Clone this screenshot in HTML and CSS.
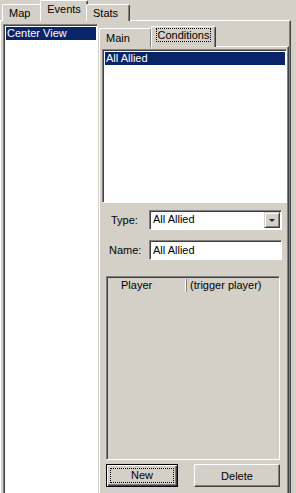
FILE: index.html
```html
<!DOCTYPE html>
<html lang="en">
<head>
  <meta charset="UTF-8">
  <title>Triggers</title>
  <link rel="stylesheet" href="styles.css">
</head>
<body>

  <div class="window">
    <div class="tabs">
      <div class="tab">Map</div>
      <div class="tab active">Events</div>
      <div class="tab">Stats</div>
    </div>

    <div class="panel">
      <div class="listbox events">
        <div class="item selected">Center View</div>
      </div>

      <div class="inner">
        <div class="tabs small">
          <div class="tab">Main</div>
          <div class="tab active"><span class="focus">Conditions</span></div>
        </div>

        <div class="inner-panel">
          <div class="listbox conditions">
            <div class="item selected">All Allied</div>
          </div>

          <div class="field type-row">
            <label>Type:</label>
            <div class="combo">
              <span class="value">All Allied</span>
              <span class="drop"><span class="arrow"></span></span>
            </div>
          </div>

          <div class="field name-row">
            <label>Name:</label>
            <div class="textbox">All Allied</div>
          </div>

          <div class="listview">
            <div class="lv-header">
              <div class="col player">Player</div>
              <div class="col value">(trigger player)</div>
            </div>
            <div class="lv-body"></div>
          </div>

          <div class="buttons">
            <button class="btn default"><span class="focus">New</span></button>
            <button class="btn">Delete</button>
          </div>
        </div>
      </div>
    </div>
  </div>

</body>
</html>
```

FILE: styles.css
```css
body {
  margin: 0;
  font-family: 'Liberation Sans', Arial, sans-serif;
  font-size: 11px;
  background: #d4d0c8;
  color: #000;
  overflow: hidden;
}

.window {
  width: 296px;
  height: 493px;
  overflow: hidden;
}

/* tab strips */
.tabs {
  display: flex;
  align-items: flex-end;
  height: 21px;
  padding-left: 2px;
  margin-bottom: -1px;
}

.tab {
  box-sizing: border-box;
  height: 17px;
  padding: 2px 6px 0;
  border-top: 1px solid #fff;
  border-left: 1px solid #fff;
  border-right: 1px solid #404040;
  box-shadow: inset -1px 0 #808080;
  border-radius: 2px 2px 0 0;
  background: #d4d0c8;
}

.tabs > .tab:first-child {
  width: 40px;
}

.tab.active {
  height: 21px;
  padding-top: 2px;
  margin: 0 -2px;
  width: 48px;
  text-align: center;
}

.tabs > .tab:last-child {
  width: 44px;
}

.panel {
  box-sizing: border-box;
  width: 291px;
  height: 473px;
  display: flex;
  align-items: flex-start;
  padding: 3px 1px 0 2px;
  border-top: 1px solid #fff;
  border-left: 1px solid #fff;
  border-right: 1px solid #404040;
  box-shadow: inset -1px 0 #808080;
}

/* list boxes */
.listbox {
  box-sizing: border-box;
  background: #fff;
  border: 1px solid;
  border-color: #808080 #fff #fff #808080;
  box-shadow: inset 1px 1px #404040;
  padding: 2px 1px 1px 2px;
}

.listbox.events {
  width: 95px;
  height: 480px;
}

.item {
  height: 13px;
  line-height: 13px;
  padding-left: 1px;
}

.item.selected {
  background: #0a246a;
  color: #fff;
}

/* inner tab control */
.inner {
  margin-left: 1px;
  width: 190px;
}

.tabs.small {
  height: 23px;
  padding-left: 0;
}

.tabs.small .tab {
  width: 53px;
  height: 19px;
  padding-top: 3px;
}

.tabs.small .tab.active {
  width: 65px;
  height: 21px;
  margin: 0 0 0 -1px;
  padding: 2px 2px 0;
}

.focus {
  display: inline-block;
  outline: 1px dotted #000;
  padding: 0 1px;
  line-height: 12px;
}

.inner-panel {
  box-sizing: border-box;
  height: 460px;
  padding: 2px 1px 0 2px;
  border-top: 1px solid #fff;
  border-left: 1px solid #fff;
  border-right: 1px solid #404040;
  box-shadow: inset -1px 0 #808080;
}

.listbox.conditions {
  width: 185px;
  height: 154px;
}

/* form rows */
.field {
  display: flex;
  align-items: center;
  height: 20px;
}

.type-row {
  margin-top: 7px;
}

.name-row {
  margin-top: 10px;
}

.field label {
  width: 38px;
  padding-left: 9px;
  color: #000;
}

.name-row label {
  padding-left: 7px;
  width: 40px;
}

.combo,
.textbox {
  box-sizing: border-box;
  width: 133px;
  height: 20px;
  background: #fff;
  border: 1px solid;
  border-color: #808080 #fff #fff #808080;
  box-shadow: inset 1px 1px #404040;
  padding: 2px 2px 0 3px;
  line-height: 15px;
}

.combo {
  display: flex;
  justify-content: space-between;
  padding-right: 1px;
  padding-top: 1px;
}

.drop {
  box-sizing: border-box;
  width: 16px;
  height: 16px;
  background: #d4d0c8;
  border: 1px solid;
  border-color: #d4d0c8 #404040 #404040 #d4d0c8;
  box-shadow: inset 1px 1px #fff, inset -1px -1px #808080;
  display: flex;
  align-items: center;
  justify-content: center;
}

.arrow {
  width: 0;
  height: 0;
  border-left: 3px solid transparent;
  border-right: 3px solid transparent;
  border-top: 3px solid #0a246a;
  margin-top: 1px;
}

/* list view */
.listview {
  box-sizing: border-box;
  width: 174px;
  height: 184px;
  margin: 16px 0 0 4px;
  border: 1px solid;
  border-color: #808080 #fff #fff #808080;
  box-shadow: inset 1px 1px #404040;
  padding: 2px 0 0 2px;
}

.lv-header {
  display: flex;
  height: 13px;
  line-height: 12px;
}

.col {
  box-sizing: border-box;
  border-right: 1px solid #808080;
  box-shadow: inset -1px 0 #fff;
}

.col.player {
  width: 78px;
  padding-left: 12px;
}

.col.value {
  flex: 1;
  padding-left: 3px;
  border-right: none;
  box-shadow: none;
}

/* buttons */
.buttons {
  display: flex;
  gap: 16px;
  margin: 4px 0 0 4px;
}

.btn {
  box-sizing: border-box;
  height: 23px;
  width: 86px;
  font-family: inherit;
  font-size: 11px;
  background: #d4d0c8;
  border: 1px solid;
  border-color: #fff #404040 #404040 #fff;
  box-shadow: inset -1px -1px #808080;
  padding: 0;
}

.btn.default {
  width: 72px;
  border: 1px solid #000;
  box-shadow: inset 1px 1px #fff, inset -1px -1px #404040, inset -2px -2px #808080;
}

.btn.default .focus {
  width: 62px;
  line-height: 13px;
  box-sizing: border-box;
}
```
